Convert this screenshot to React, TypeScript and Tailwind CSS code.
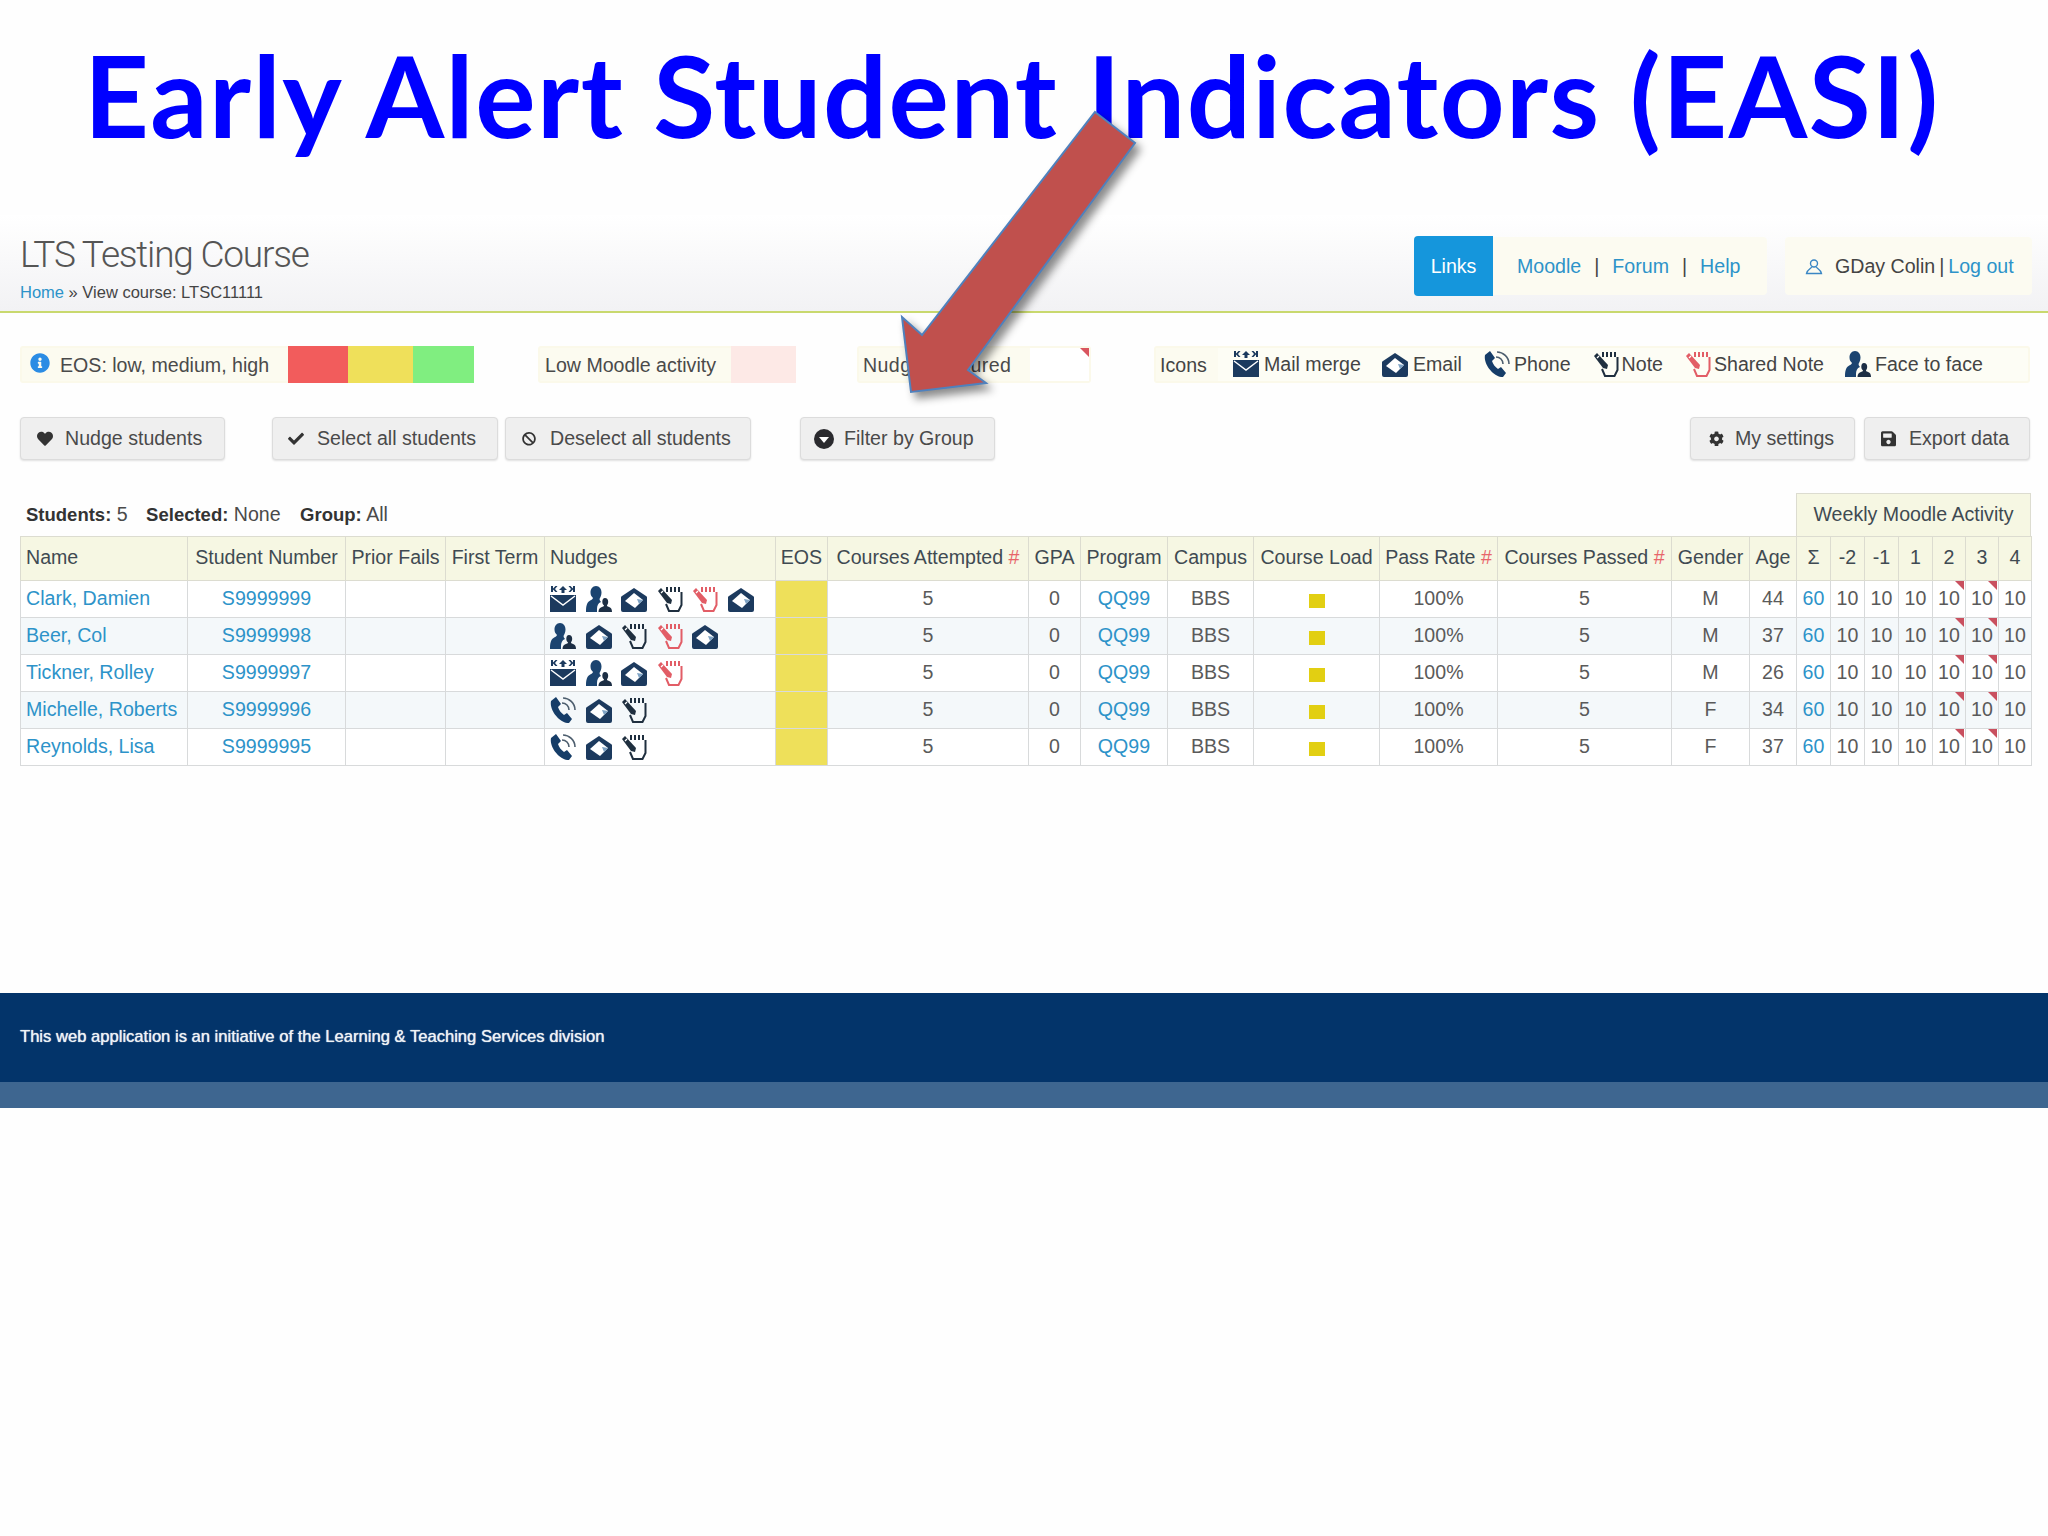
import { FaBan, FaCheck, FaCog, FaHeart, FaInfoCircle, FaSave } from "react-icons/fa";

const navy = "#1c3a5e";

function MailMerge() {
  return (
    <svg viewBox="0 0 26 26" className="w-[26px] h-[26px] shrink-0">
      <path d="M1 0h2v2.500L5.500 0h2L5 3l2.500 3h-2L3 3.500V6H1zM25 0h-2v2.500L20.500 0h-2L21 3l-2.500 3h2L23 3.500V6h2z" fill={navy} />
      <path d="M13 0l4 4h-2.500v3h-3V4H9z" fill={navy} />
      <path d="M0 9h26v17H0z" fill={navy} />
      <path d="M1 10l12 9 12-9" fill="none" stroke="#fff" strokeWidth="1.400" />
    </svg>
  );
}

function Face() {
  return (
    <svg viewBox="0 0 26 26" className="w-[26px] h-[26px] shrink-0">
      <path d="M10 0c3.500 0 5.500 3 5.500 6.500 0 3-1.200 5-2 6.500 0 1 .5 2 1.500 3-3 1-4 4-4 7v3H0c0-5 .5-9 3.500-11 1.500-1 3-1.500 3.500-3C5.500 10.500 4.500 9 4.500 6.500 4.500 3 6.500 0 10 0z" fill="#1b4470" />
      <path d="M19 12c2 0 3.200 1.700 3.200 3.800 0 1.700-.8 3-1.200 3.700 0 .7.500 1 1.500 1.300 2.500.8 3.500 2 3.500 5.200H12.500c0-3.200 1.500-4.400 4-5.200 1-.3 1.500-.6 1.500-1.300-1-.7-1.700-2-1.700-3.700 0-2.100 1-3.800 2.700-3.800z" fill="#1d2f45" />
    </svg>
  );
}

function Email() {
  return (
    <svg viewBox="0 0 26 26" className="w-[26px] h-[26px] shrink-0">
      <path d="M13 2l12 8a2 2 0 0 1 1 2v12a2 2 0 0 1-2 2H2a2 2 0 0 1-2-2V12a2 2 0 0 1 1-2z" fill={navy} />
      <path d="M4 15l9-8 9 7-8 8z" fill="#fff" />
      <path d="M16 13l6 1-4 4z" fill="#7fa3c4" />
    </svg>
  );
}

function Phone() {
  return (
    <svg viewBox="0 0 26 26" className="w-[26px] h-[26px] shrink-0">
      <path d="M1 4l5-4 5 7-3 3c1 3 3 6 6 8l3-2 5 6-3 4C11 27-1 14 1 4z" fill="#163d68" />
      <path d="M12 6c4 0 7 3 7 7M13 1c6 0 12 5 12 12" fill="none" stroke="#4d5e6e" strokeWidth="1.600" />
    </svg>
  );
}

function Note({ color = "#1f2f3f" }: { color?: string }) {
  return (
    <svg viewBox="0 0 26 26" className="w-[26px] h-[26px] shrink-0">
      <path d="M10 1v5M14 1v5M18 1v5M22 1v5" stroke={color} strokeWidth="2" fill="none" />
      <path d="M24.500 6v13l-3 6H12l-3-7" stroke={color} strokeWidth="2" fill="none" />
      <path d="M1 5l3-3 11 12-1 4-4-1z" fill={color} />
      <path d="M4 7l2-2" stroke="#fff" strokeWidth="1.200" />
    </svg>
  );
}

function Circle() {
  return (
    <svg viewBox="0 0 20 20" className="w-[20px] h-[20px] shrink-0">
      <circle cx="10" cy="10" r="10" fill="#2a2a2e" />
      <path d="M5 8h10l-5 6z" fill="#fff" />
    </svg>
  );
}

function UserIcon() {
  return (
    <svg viewBox="0 0 18 18" className="w-[18px] h-[18px] shrink-0" fill="none" stroke="#3a86c4" strokeWidth="1.400">
      <circle cx="9" cy="5.500" r="3.500" />
      <path d="M6.500 9c0 1.500-4.500 2.500-5 6.500h15c-.5-4-5-5-5-6.500" />
    </svg>
  );
}

const red = "#e25d66";

const nudgeIcons = {
  mail: <MailMerge />,
  face: <Face />,
  email: <Email />,
  phone: <Phone />,
  note: <Note />,
  shared: <Note color={red} />,
};

type NudgeKey = keyof typeof nudgeIcons;

const students: { name: string; id: string; nudges: NudgeKey[]; gender: string; age: number }[] = [
  { name: "Clark, Damien", id: "S9999999", nudges: ["mail", "face", "email", "note", "shared", "email"], gender: "M", age: 44 },
  { name: "Beer, Col", id: "S9999998", nudges: ["face", "email", "note", "shared", "email"], gender: "M", age: 37 },
  { name: "Tickner, Rolley", id: "S9999997", nudges: ["mail", "face", "email", "shared"], gender: "M", age: 26 },
  { name: "Michelle, Roberts", id: "S9999996", nudges: ["phone", "email", "note"], gender: "F", age: 34 },
  { name: "Reynolds, Lisa", id: "S9999995", nudges: ["phone", "email", "note"], gender: "F", age: 37 },
];

const th = "border border-[#dcdcd0] bg-[#f6f7e3] font-normal text-[#3f4a52] text-center whitespace-nowrap px-0 pb-[2px]";
const td = "border border-[#d8dadb] text-center p-0";
const grey = "text-[#5a5a5a]";
const link = "text-[#2d93c9]";
const btn = "h-[43px] flex items-center rounded-[4px] border border-[#dcdcdc] bg-[#efefef] shadow-[0_1px_2px_rgba(0,0,0,0.12)] text-[#4a4a4a] pt-[1px]";
const legend = "flex items-center bg-[#fcfbf0] border-2 border-[#fbf9ea] rounded-[3px]";

export default function App() {
  return (
    <div className="relative w-[2048px] min-h-[1536px] bg-[#fefefe] overflow-hidden font-['Liberation_Sans',Arial,sans-serif] text-[19.600px] text-[#444]">
      {/* Slide title */}
      <h1 className="h-[215px] pl-[84px] pt-[30px] font-['Lato',sans-serif] font-bold text-[113px] tracking-[1.500px] leading-[128px] text-[#0000ff] whitespace-nowrap">
        Early Alert Student Indicators (EASI)
      </h1>

      {/* Header */}
      <div className="h-[98px] flex justify-between pl-[20px] pr-[16px] border-b-2 border-[#c9d96e] bg-gradient-to-b from-[#ffffff] to-[#f2f2f4]">
        <div>
          <div className="mt-[19px] text-[37px] leading-[42px] tracking-[-1.200px] text-[#555] font-['Roboto',sans-serif] font-light">LTS Testing Course</div>
          <div className="mt-[6px] text-[16.500px] leading-[20px] text-[#444]">
            <span className={link}>Home</span> » View course: LTSC11111
          </div>
        </div>
        <div className="flex mt-[22px] h-[60px]">
          <div className="w-[353px] h-[58px] flex items-center bg-[#fcfbf1] rounded-[4px]">
            <div className="w-[79px] h-[60px] flex items-center justify-center bg-[#1596dc] rounded-l-[4px] text-white pt-[2px]">Links</div>
            <div className="flex items-center pt-[2px]">
              <span className={`${link} ml-[24px]`}>Moodle</span>
              <span className="mx-[13px]">|</span>
              <span className={link}>Forum</span>
              <span className="mx-[13px]">|</span>
              <span className={link}>Help</span>
            </div>
          </div>
          <div className="w-[247px] h-[58px] ml-[18px] flex items-center bg-[#fcfbf1] rounded-[4px] pl-[20px] pt-[2px]">
            <UserIcon />
            <span className="ml-[12px]">GDay Colin</span>
            <span className="mx-[4px]">|</span>
            <span className={link}>Log out</span>
          </div>
        </div>
      </div>

      {/* Legend */}
      <div className="flex mt-[33px] ml-[20px] h-[37px]">
        <div className={`${legend} w-[454px]`}>
          <FaInfoCircle className="ml-[8px] w-[20px] shrink-0 text-[#2b8ce4] text-[20px] -mt-[3px]" />
          <span className="ml-[10px] w-[228px] shrink-0 text-[#4a4a4a] pt-[2px]">EOS: low, medium, high</span>
          <div className="w-[60px] h-[37px] shrink-0 bg-[#f25c5c]" />
          <div className="w-[65px] h-[37px] shrink-0 bg-[#efe05a]" />
          <div className="w-[61px] h-[37px] shrink-0 bg-[#80ee80]" />
        </div>
        <div className={`${legend} w-[258px] ml-[64px]`}>
          <span className="ml-[5px] w-[186px] shrink-0 text-[#4a4a4a] pt-[2px]">Low Moodle activity</span>
          <div className="w-[65px] h-[37px] shrink-0 bg-[#fde9e6]" />
        </div>
        <div className={`${legend} w-[234px] ml-[61px]`}>
          <span className="ml-[4px] w-[167px] shrink-0 text-[#4a4a4a] whitespace-nowrap tracking-[0.400px] pt-[2px]">Nudges occured</span>
          <div className="relative w-[59px] h-full shrink-0 bg-white">
            <div className="absolute top-0 right-0 border-t-[9px] border-l-[9px] border-t-[#d9555f] border-l-transparent" />
          </div>
        </div>
        <div className={`${legend} w-[876px] ml-[63px] bg-[#fdfdf5]`}>
          <span className="w-[62px] h-full flex items-center pl-[4px] pt-[2px] bg-[#fcfbf0]">Icons</span>
          <div className="ml-[15px] flex items-center gap-[5px]"><MailMerge /><span>Mail merge</span></div>
          <div className="ml-[21px] flex items-center gap-[5px]"><Email /><span>Email</span></div>
          <div className="ml-[22px] flex items-center gap-[4px]"><Phone /><span>Phone</span></div>
          <div className="ml-[22px] flex items-center gap-[3px]"><Note /><span>Note</span></div>
          <div className="ml-[22px] flex items-center gap-[3px]"><Note color={red} /><span>Shared Note</span></div>
          <div className="ml-[21px] flex items-center gap-[4px]"><Face /><span>Face to face</span></div>
        </div>
      </div>

      {/* Buttons */}
      <div className="flex mt-[34px] ml-[20px]">
        <div className={`${btn} w-[205px]`}><FaHeart className="ml-[16px] w-[16px] text-[#333]" /><span className="ml-[12px]">Nudge students</span></div>
        <div className={`${btn} w-[226px] ml-[47px]`}><FaCheck className="ml-[15px] w-[16px] text-[#333]" /><span className="ml-[13px]">Select all students</span></div>
        <div className={`${btn} w-[246px] ml-[7px]`}><FaBan className="ml-[16px] w-[14px] text-[#333]" /><span className="ml-[14px]">Deselect all students</span></div>
        <div className={`${btn} w-[195px] ml-[49px]`}><div className="ml-[13px]"><Circle /></div><span className="ml-[10px]">Filter by Group</span></div>
        <div className={`${btn} w-[165px] ml-[695px]`}><FaCog className="ml-[18px] w-[15px] text-[#333]" /><span className="ml-[11px]">My settings</span></div>
        <div className={`${btn} w-[166px] ml-[9px]`}><FaSave className="ml-[16px] w-[15px] text-[#333]" /><span className="ml-[13px]">Export data</span></div>
      </div>

      {/* Summary line */}
      <div className="flex justify-between items-center mt-[33px] ml-[26px] mr-[17px] h-[43px]">
        <div className="text-[#4a4a4a]">
          <b className="text-[#333] text-[18.500px]">Students:</b> 5 <b className="text-[#333] text-[18.500px] ml-[13px]">Selected:</b> None <b className="text-[#333] text-[18.500px] ml-[14px]">Group:</b> All
        </div>
        <div className="w-[235px] h-full flex items-center justify-center border border-b-0 border-[#dcdcd0] bg-[#f6f7e3] text-[#3f4a52]">Weekly Moodle Activity</div>
      </div>

      {/* Student table */}
      <table className="ml-[20px] w-[2011px] table-fixed border-collapse">
        <colgroup>
          <col className="w-[167px]" />
          <col className="w-[158px]" />
          <col className="w-[100px]" />
          <col className="w-[99px]" />
          <col className="w-[231px]" />
          <col className="w-[52px]" />
          <col className="w-[201px]" />
          <col className="w-[52px]" />
          <col className="w-[87px]" />
          <col className="w-[86px]" />
          <col className="w-[126px]" />
          <col className="w-[118px]" />
          <col className="w-[174px]" />
          <col className="w-[78px]" />
          <col className="w-[47px]" />
          <col className="w-[34px]" />
          <col className="w-[34px]" />
          <col className="w-[34px]" />
          <col className="w-[34px]" />
          <col className="w-[33px]" />
          <col className="w-[33px]" />
          <col className="w-[33px]" />
        </colgroup>
        <thead>
          <tr className="h-[44px]">
            <th className={`${th} text-left pl-[5px]`}>Name</th>
            <th className={th}>Student Number</th>
            <th className={th}>Prior Fails</th>
            <th className={th}>First Term</th>
            <th className={`${th} text-left pl-[5px]`}>Nudges</th>
            <th className={th}>EOS</th>
            <th className={th}>Courses Attempted <span className="text-[#e8656a]">#</span></th>
            <th className={th}>GPA</th>
            <th className={th}>Program</th>
            <th className={th}>Campus</th>
            <th className={th}>Course Load</th>
            <th className={th}>Pass Rate <span className="text-[#e8656a]">#</span></th>
            <th className={th}>Courses Passed <span className="text-[#e8656a]">#</span></th>
            <th className={th}>Gender</th>
            <th className={th}>Age</th>
            {["Σ", "-2", "-1", "1", "2", "3", "4"].map((h) => (
              <th key={h} className={th}>{h}</th>
            ))}
          </tr>
        </thead>
        <tbody>
          {students.map((s, i) => (
            <tr key={s.id} className={`h-[37px] ${i % 2 ? "bg-[#f4f8fa]" : "bg-white"}`}>
              <td className={`${td} text-left pl-[5px] whitespace-nowrap ${link}`}>{s.name}</td>
              <td className={`${td} ${link}`}>{s.id}</td>
              <td className={td} />
              <td className={td} />
              <td className={`${td} pl-[5px]`}>
                <div className="flex gap-[9.500px]">
                  {s.nudges.map((n, j) => (
                    <span key={j}>{nudgeIcons[n]}</span>
                  ))}
                </div>
              </td>
              <td className={`${td} bg-[#eee05a]`} />
              <td className={`${td} ${grey}`}>5</td>
              <td className={`${td} ${grey}`}>0</td>
              <td className={`${td} ${link}`}>QQ99</td>
              <td className={`${td} ${grey}`}>BBS</td>
              <td className={td}>
                <div className="w-[16px] h-[14px] mx-auto mt-[4px] bg-[#e2cf12]" />
              </td>
              <td className={`${td} ${grey}`}>100%</td>
              <td className={`${td} ${grey}`}>5</td>
              <td className={`${td} ${grey}`}>{s.gender}</td>
              <td className={`${td} ${grey}`}>{s.age}</td>
              <td className={`${td} ${link}`}>60</td>
              <td className={`${td} ${grey}`}>10</td>
              <td className={`${td} ${grey}`}>10</td>
              <td className={`${td} ${grey}`}>10</td>
              <td className={`${td} ${grey} relative`}>
                10
                <div className="absolute top-0 right-[1px] border-t-[9px] border-l-[9px] border-t-[#c9505f] border-l-transparent" />
              </td>
              <td className={`${td} ${grey} relative`}>
                10
                <div className="absolute top-0 right-[1px] border-t-[9px] border-l-[9px] border-t-[#c9505f] border-l-transparent" />
              </td>
              <td className={`${td} ${grey}`}>10</td>
            </tr>
          ))}
        </tbody>
      </table>

      {/* Footer */}
      <div className="mt-[227px] h-[89px] flex items-center pl-[20px] bg-[#03346a] text-[16.600px] text-[#eef2f6] [text-shadow:0_0_1px_#ffffff]">
        This web application is an initiative of the Learning &amp; Teaching Services division
      </div>
      <div className="h-[26px] bg-[#3e6690]" />

      {/* Arrow drawn over the slide */}
      <svg viewBox="0 0 2048 1536" className="absolute top-0 left-0 w-[2048px] h-[1536px] pointer-events-none drop-shadow-[5px_6px_4px_rgba(0,0,0,0.45)]">
        <polygon points="1095,112 1135,143 968,370 986,383 911,392 902,317 922,335" fill="#c0504d" stroke="#4f81bd" strokeWidth="2" />
      </svg>
    </div>
  );
}
